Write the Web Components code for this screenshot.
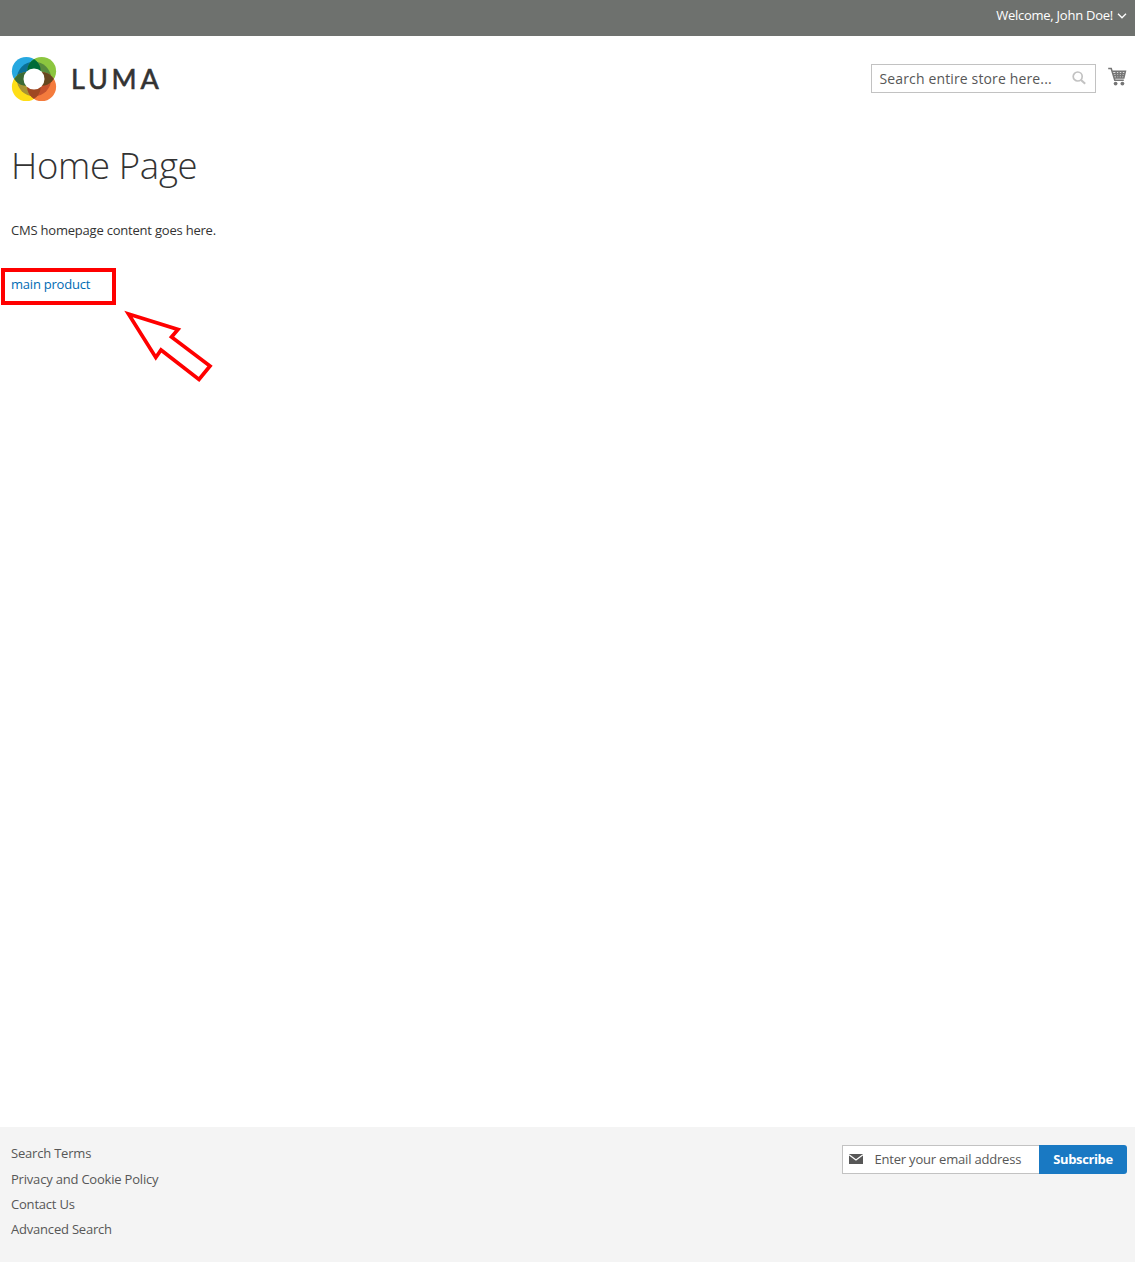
<!DOCTYPE html>
<html lang="en">
<head>
<meta charset="utf-8">
<title>Home Page</title>
<style>
html,body{margin:0;height:100%}
body{background:#fff;color:#333;font:13px/18px "Open Sans",sans-serif}
</style>
</head>
<body>
<store-page></store-page>
<script>
const define = (name, html) => customElements.define(name, class extends HTMLElement {
  constructor() {
    super();
    this.attachShadow({ mode: 'open' }).innerHTML = html;
  }
});

define('top-panel', `
<style>
:host{display:flex;justify-content:flex-end;box-sizing:border-box;height:36px;padding:6px 8px 0 0;background:#6e716e;color:#fff;letter-spacing:-.25px}
svg{width:10px;height:6px;margin:7px 0 0 4px}
</style>
<span><slot></slot></span><svg viewBox="0 0 10 6"><path d="M1 .8 5 4.8 9 .8" fill="none" stroke="#fff" stroke-width="1.3"/></svg>`);

define('luma-logo', `
<style>
:host{display:flex;align-items:center;height:46px}
svg{width:46px;height:46px}
span{font:400 27px/44px Lato,sans-serif;color:#333;-webkit-text-stroke:.6px #333;letter-spacing:3.8px;margin:-1px 0 0 14px}
</style>
<svg viewBox="11 56 46 46">
<defs>
<clipPath id="tl"><circle cx="26.3" cy="71.3" r="14.4"/></clipPath>
<clipPath id="br"><circle cx="41.7" cy="86.7" r="14.4"/></clipPath>
<clipPath id="tr"><circle cx="41.7" cy="71.3" r="14.4"/></clipPath>
<clipPath id="bl"><circle cx="26.3" cy="86.7" r="14.4"/></clipPath>
</defs>
<circle cx="26.3" cy="71.3" r="14.4" fill="#26a8e0"/>
<circle cx="41.7" cy="71.3" r="14.4" fill="#8cc63f"/>
<circle cx="26.3" cy="86.7" r="14.4" fill="#ffde17"/>
<circle cx="41.7" cy="86.7" r="14.4" fill="#f47b3d"/>
<g clip-path="url(#tl)"><circle cx="34" cy="79" r="17.3" fill="#0b7095"/></g>
<g clip-path="url(#tr)"><circle cx="34" cy="79" r="17.3" fill="#578b3d"/></g>
<g clip-path="url(#bl)"><circle cx="34" cy="79" r="17.3" fill="#a89433"/></g>
<g clip-path="url(#br)"><circle cx="34" cy="79" r="17.3" fill="#c4512d"/></g>
<g clip-path="url(#tl)"><circle cx="41.7" cy="71.3" r="14.4" fill="#006b38"/><circle cx="26.3" cy="86.7" r="14.4" fill="#3b6b35"/></g>
<g clip-path="url(#br)"><circle cx="41.7" cy="71.3" r="14.4" fill="#65471f"/><circle cx="26.3" cy="86.7" r="14.4" fill="#9f4822"/></g>
<circle cx="34" cy="79" r="10.5" fill="#fff"/>
</svg><span>LUMA</span>`);

define('search-box', `
<style>
:host{display:flex;justify-content:space-between;box-sizing:border-box;width:225px;height:29px;padding:0 9px 0 7.5px;border:1px solid #c2c2c2;font-size:14px;line-height:27px;color:#575757;letter-spacing:.14px}
svg{width:14px;height:14px;margin-top:6px}
</style>
<span><slot></slot></span>
<svg viewBox="0 0 14 14" fill="none" stroke="#c2c2c2"><circle cx="5.7" cy="5.5" r="4.5" stroke-width="1.7"/><path d="m9 9 4.2 3.8" stroke-width="2.1"/></svg>`);

define('cart-icon', `
<style>:host{display:block;width:19px;height:19px}svg{display:block}</style>
<svg width="19" height="19" viewBox="0 0 19 19"><path d="M.2 1.5H3.2L6.8 13.3H15.8M4 4.2H17.4L15.8 10.9H6.2M4.8 6.4H17M5.4 8.6H16.3M8 4.2 8.8 10.9M11 4.2V10.9M14.2 4.2 13.4 10.9" fill="none" stroke="#757575" stroke-width="1.55"/><circle cx="7.6" cy="16.6" r="1.9" fill="#757575"/><circle cx="14.4" cy="16.6" r="1.9" fill="#757575"/></svg>`);

define('site-header', `
<style>
:host{display:flex;justify-content:space-between;padding:20px 8px 0 11px;height:66px}
div{display:flex;align-items:flex-start;gap:12px;padding-top:8px}
cart-icon{margin-top:3px}
</style>
<luma-logo></luma-logo>
<div><search-box>Search entire store here...</search-box><cart-icon></cart-icon></div>`);

define('callout-box', `
<style>
:host{display:flex;position:relative;box-sizing:border-box;width:115px;height:37px;margin:29px 0 0 1px;padding:3px 0 0 6px;border:4px solid #f00;letter-spacing:-.22px}
a{color:#006bb4;text-decoration:none}
svg{position:absolute;left:117px;top:37px;width:96px;height:78px}
</style>
<a><slot></slot></a>
<svg viewBox="122 309 96 78"><path d="M128.5 314 178 329.5 171.5 337 210 366 199 379.5 161 350 155.8 357.5Z" fill="none" stroke="#f00" stroke-width="3.7"/></svg>`);

define('page-content', `
<style>
:host{display:block;flex:1}
h1{font-weight:300;font-size:36.5px;letter-spacing:-.32px;line-height:44px;margin:21px 0 0 11px}
p{margin:34px 0 0 11px;letter-spacing:-.21px}
</style>
<h1>Home Page</h1>
<p>CMS homepage content goes here.</p>
<callout-box>main product</callout-box>`);

define('newsletter-form', `
<style>
:host{display:flex;width:285px;height:29px}
div{display:flex;flex:1;align-items:center;box-sizing:border-box;border:1px solid #c2c2c2;border-right:0;background:#fff;padding-left:6px;color:#575757;letter-spacing:-.2px}
svg{width:14px;height:10px;margin:-1px 11.5px 0 0}
span{margin-top:-1px}
b{width:88px;font-weight:700;letter-spacing:-.38px;line-height:29px;text-align:center;background:#1979c3;color:#fff;border-radius:0 3px 3px 0}
</style>
<div><svg viewBox="0 0 14 10"><path d="M0 0H14V10H0Z" fill="#575757"/><path d="M0 .8 7 6 14 .8" fill="none" stroke="#fff" stroke-width="1.3"/></svg><span>Enter your email address</span></div><b>Subscribe</b>`);

define('site-footer', `
<style>
:host{display:flex;justify-content:space-between;box-sizing:border-box;height:135px;padding:18px 8px 0 11px;background:#f4f4f4}
nav{display:flex;flex-direction:column;gap:7.25px;color:#575757;margin-top:-.7px;letter-spacing:-.2px}
</style>
<nav><span>Search Terms</span><span>Privacy and Cookie Policy</span><span>Contact Us</span><span>Advanced Search</span></nav>
<newsletter-form></newsletter-form>`);

define('store-page', `
<style>:host{display:flex;flex-direction:column;height:1262px}</style>
<top-panel>Welcome, John Doe!</top-panel>
<site-header></site-header>
<page-content></page-content>
<site-footer></site-footer>`);
</script>
</body>
</html>
